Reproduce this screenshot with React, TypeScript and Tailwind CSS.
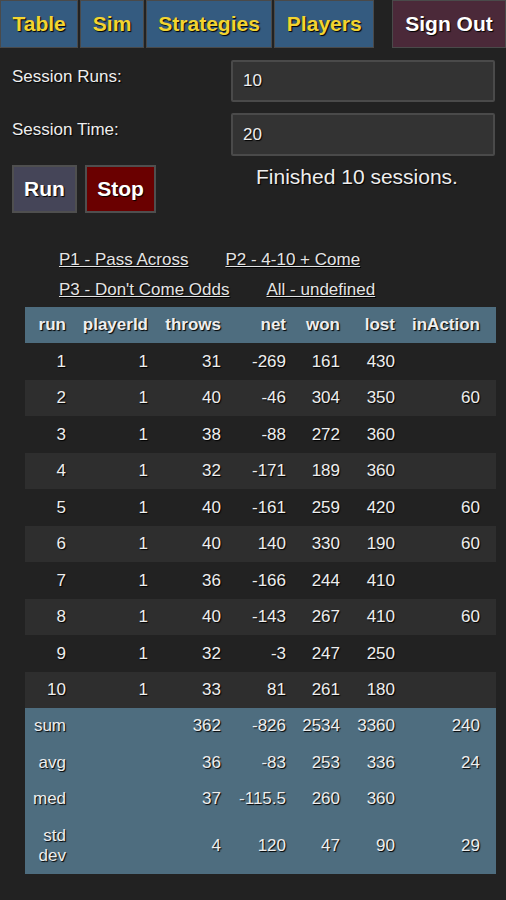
import React from "react";

const rows = [
  [1, 1, 31, -269, 161, 430, ""],
  [2, 1, 40, -46, 304, 350, 60],
  [3, 1, 38, -88, 272, 360, ""],
  [4, 1, 32, -171, 189, 360, ""],
  [5, 1, 40, -161, 259, 420, 60],
  [6, 1, 40, 140, 330, 190, 60],
  [7, 1, 36, -166, 244, 410, ""],
  [8, 1, 40, -143, 267, 410, 60],
  [9, 1, 32, -3, 247, 250, ""],
  [10, 1, 33, 81, 261, 180, ""],
];

const stats = [
  ["sum", "", 362, -826, 2534, 3360, 240],
  ["avg", "", 36, -83, 253, 336, 24],
  ["med", "", 37, -115.5, 260, 360, ""],
  ["std dev", "", 4, 120, 47, 90, 29],
];

const headers = ["run", "playerId", "throws", "net", "won", "lost", "inAction"];
const widths = ["w-[49px]", "w-[82px]", "w-[73px]", "w-[65px]", "w-[54px]", "w-[55px]", "w-[93px]"];

const shadow = "[text-shadow:1px_1px_1px_#000]";

function Tab({ label }: { label: string }) {
  return (
    <a
      className={`h-12 flex items-center px-[11.5px] bg-[#345b80] border border-[#4a4a4a] text-[21px] font-bold text-[#f3d430] ${shadow}`}
    >
      {label}
    </a>
  );
}

export default function App() {
  return (
    <div
      className="min-h-screen bg-[#222222] text-[#eeeeee] text-[17px]"
      style={{ fontFamily: '"Liberation Sans", Arial, sans-serif' }}
    >
      <nav className="flex items-start gap-[2px]">
        <Tab label="Table" />
        <Tab label="Sim" />
        <Tab label="Strategies" />
        <Tab label="Players" />
        <div className="flex-1" />
        <a
          className={`h-12 w-[114px] flex items-center justify-center bg-[#4b2939] border border-[#4a4a4a] text-[21px] font-bold text-white ${shadow}`}
        >
          Sign Out
        </a>
      </nav>

      <div className="grid grid-cols-[219px_264px] pl-3 pt-3 gap-y-[11px]">
        <label className={`pt-[4px] ${shadow}`}>Session Runs:</label>
        <div className="h-[42px] bg-[#333333] border-2 border-[#4a4a4a] rounded-[2px] flex items-center px-[10px]">
          <span className={shadow}>10</span>
        </div>
        <label className={`pt-[4px] ${shadow}`}>Session Time:</label>
        <div className="h-[43px] bg-[#333333] border-2 border-[#4a4a4a] rounded-[2px] flex items-center px-[10px]">
          <span className={shadow}>20</span>
        </div>
        <div className="flex gap-2 -mt-[2px]">
          <button
            className={`w-[65px] h-12 bg-[#454558] border-2 border-[#4f4f4f] text-[21px] font-bold text-white ${shadow}`}
          >
            Run
          </button>
          <button
            className={`w-[71px] h-12 bg-[#6a0000] border-2 border-[#4f4f4f] text-[21px] font-bold text-white ${shadow}`}
          >
            Stop
          </button>
        </div>
        <div className={`text-[21px] text-center pr-3 -mt-[2px] leading-6 ${shadow}`}>
          Finished 10 sessions.
        </div>
      </div>

      <div className="pl-[59px] mt-[35px] flex flex-col gap-[6px] text-[#e4e4e4]">
        <div className="flex gap-[37px]">
          <a className={`underline leading-6 ${shadow}`}>P1 - Pass Across</a>
          <a className={`underline leading-6 ${shadow}`}>P2 - 4-10 + Come</a>
        </div>
        <div className="flex gap-[37px]">
          <a className={`underline leading-6 ${shadow}`}>P3 - Don't Come Odds</a>
          <a className={`underline leading-6 ${shadow}`}>All - undefined</a>
        </div>
      </div>

      <table className="ml-[25px] mt-[5px] w-[471px] table-fixed border-collapse">
        <colgroup>
          {widths.map((w, i) => (
            <col key={i} className={w} />
          ))}
        </colgroup>
        <thead>
          <tr className="h-[36px] bg-[#4e6d7f]">
            {headers.map((h, i) => (
              <th
                key={h}
                className={`text-right font-bold ${i === 6 ? "pr-4" : "pr-2"} ${shadow}`}
              >
                {h}
              </th>
            ))}
          </tr>
        </thead>
        <tbody>
          {rows.map((r, ri) => (
            <tr key={ri} className={`h-[36.5px] ${ri % 2 === 1 ? "bg-[#2e2e2e]" : ""}`}>
              {r.map((c, i) => (
                <td key={i} className={`text-right ${i === 6 ? "pr-4" : "pr-2"} ${shadow}`}>
                  {c}
                </td>
              ))}
            </tr>
          ))}
          {stats.map((r, ri) => (
            <tr key={"s" + ri} className={`bg-[#4e6d7f] ${ri === 3 ? "h-[56px]" : "h-[36.5px]"}`}>
              {r.map((c, i) => (
                <td
                  key={i}
                  className={`text-right leading-5 ${i === 6 ? "pr-4" : "pr-2"} ${i === 0 ? "pl-2" : ""} ${shadow}`}
                >
                  {c}
                </td>
              ))}
            </tr>
          ))}
        </tbody>
      </table>
    </div>
  );
}
